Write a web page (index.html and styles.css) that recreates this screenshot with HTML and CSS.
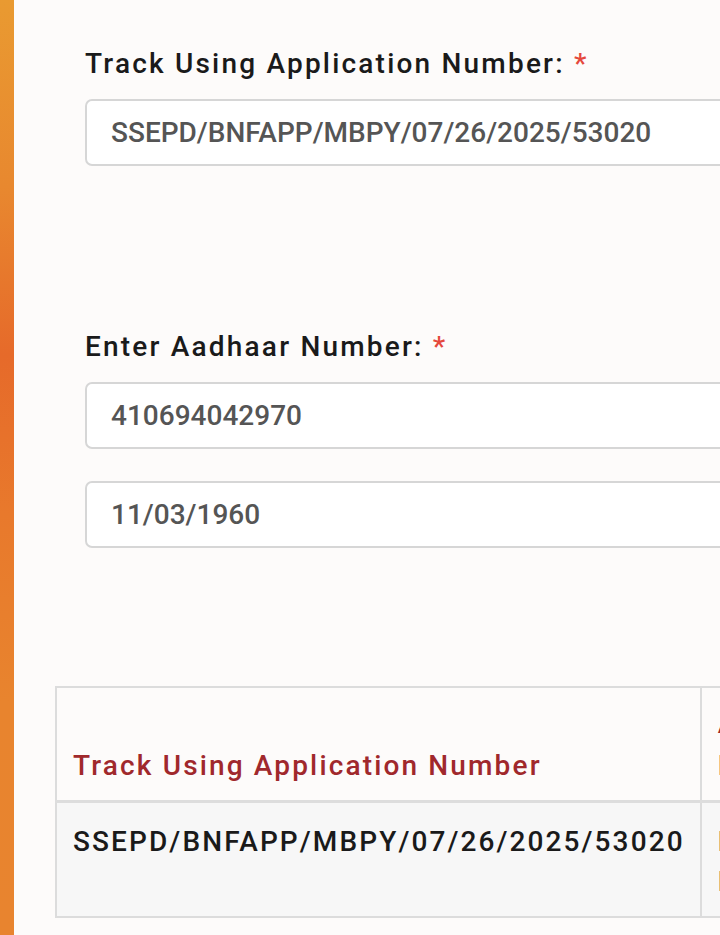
FILE: index.html
```html
<!DOCTYPE html>
<html lang="en">
<head>
<meta charset="utf-8">
<title>Track Application</title>
<link rel="stylesheet" href="styles.css">
</head>
<body>
<div class="page">
  <div class="strip"></div>
  <main class="main">
    <section class="field first">
      <label class="label">Track Using Application Number: <span class="req">*</span></label>
      <div class="input">SSEPD/BNFAPP/MBPY/07/26/2025/53020</div>
    </section>
    <section class="field second">
      <label class="label">Enter Aadhaar Number: <span class="req">*</span></label>
      <div class="input">410694042970</div>
      <div class="input">11/03/1960</div>
    </section>
    <div class="table-wrap">
      <table class="result">
        <thead>
          <tr>
            <th class="c1">Track Using Application Number</th>
            <th class="c2">Applicant Name</th>
          </tr>
        </thead>
        <tbody>
          <tr>
            <td class="c1">SSEPD/BNFAPP/MBPY/07/26/2025/53020</td>
            <td class="c2">Beneficiary Pending</td>
          </tr>
        </tbody>
      </table>
    </div>
  </main>
</div>
</body>
</html>
```

FILE: styles.css
```css
html, body {
  margin: 0;
  padding: 0;
}
body {
  width: 720px;
  height: 935px;
  overflow: hidden;
  background: #fdfbfa;
  font-family: Roboto, "Noto Sans", sans-serif;
}
.page {
  display: flex;
  height: 935px;
  overflow: hidden;
}
.strip {
  width: 14px;
  flex: none;
  background: linear-gradient(to bottom, #e99a31 0%, #e8882f 20%, #e66a2a 38%, #e8792c 55%, #e8842e 75%, #e8842f 100%);
}
.main {
  flex: none;
  width: 900px;
  padding-left: 71px;
  box-sizing: border-box;
}
.field {
  display: flex;
  flex-direction: column;
}
.field.first {
  padding-top: 46px;
}
.field.second {
  padding-top: 131px;
}
.label {
  font-size: 28px;
  font-weight: 500;
  letter-spacing: 2.2px;
  color: #1a1a1a;
  line-height: 36px;
  margin-bottom: 17px;
}
.req {
  color: #e5483c;
}
.input {
  width: 760px;
  height: 67px;
  box-sizing: border-box;
  border: 2px solid #d6d6d6;
  border-radius: 7px;
  background: #ffffff;
  padding-left: 24px;
  display: flex;
  align-items: center;
  font-size: 28px;
  font-weight: 500;
  color: #555555;
  margin-bottom: 32px;
}
.table-wrap {
  margin-left: -30px;
  padding-top: 106px;
}
.result {
  border-collapse: collapse;
  border: 2px solid #dcdcdc;
}
.result th, .result td {
  text-align: left;
  font-size: 28px;
  font-weight: 500;
  border-right: 2px solid #dcdcdc;
}
.result th {
  height: 99px;
  vertical-align: bottom;
  padding: 0 15px 13px 16px;
  color: #a0282c;
  background: #fdfbfa;
  border-bottom: 3px solid #dddddd;
  line-height: 42px;
  letter-spacing: 2.15px;
}
.result td {
  height: 94px;
  vertical-align: top;
  padding: 19px 15px 0 16px;
  color: #1a1a1a;
  background: #f7f7f7;
  line-height: 40px;
  letter-spacing: 2.1px;
}
.result .c1 {
  width: 610px;
}
.result .c2 {
  width: 160px;
}
```
